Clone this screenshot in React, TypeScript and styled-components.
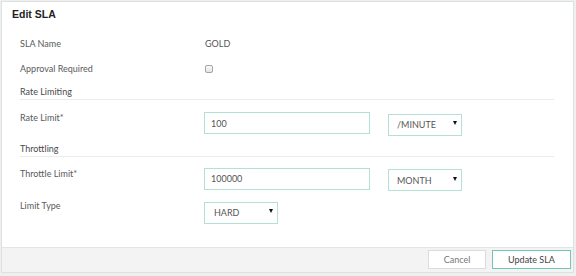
import React from 'react'
import styled, { createGlobalStyle } from 'styled-components'

const GlobalStyles = createGlobalStyle`
  html,
  body {
    margin: 0;
    padding: 0;
    background: #eef0ef;
  }
  body {
    font-family: Lato, 'Open Sans', Arial, sans-serif;
  }
`

const Modal = styled.div`
  box-sizing: border-box;
  margin: 1px 0 0 1px;
  width: 573px;
  height: 272px;
  border: 1px solid #dde2e0;
  background: #fff;
  display: flex;
  flex-direction: column;
`

const Header = styled.div`
  height: 28px;
  padding: 6px 0 0 10px;
  box-sizing: border-box;
`

const Title = styled.h3`
  margin: 0;
  font-family: 'Liberation Sans', Arial, sans-serif;
  font-weight: bold;
  font-size: 10.5px;
  line-height: 12px;
  color: #222;
`

const Body = styled.div`
  flex: 1;
  padding: 1px 19px 0 18px;
`

const StaticRow = styled.div`
  display: grid;
  grid-template-columns: 184px 1fr;
  height: 25px;
  align-items: center;
`

const Label = styled.div`
  font-size: 9px;
  line-height: 12px;
  color: #5a5a5a;
`

const Value = styled.div`
  font-size: 9px;
  color: #555;
  padding-left: 1px;
`

const Check = styled.input.attrs({ type: 'checkbox' })`
  appearance: none;
  margin: 0 0 0 1px;
  width: 8px;
  height: 8px;
  border: 1px solid #a5a5a5;
  border-radius: 2px;
  background: linear-gradient(#fafafa, #e4e4e4);
`

const Section = styled.div<{ $gap: number }>`
  margin-top: ${p => p.$gap}px;
  padding: 5px 0 1px 0;
  font-size: 9px;
  line-height: 12px;
  color: #4a4a4a;
  border-bottom: 1px solid #ebebeb;
`

const FieldRow = styled.div<{ $gap: number }>`
  display: grid;
  grid-template-columns: 184px 1fr;
  align-items: start;
  margin-top: ${p => p.$gap}px;
`

const Controls = styled.div`
  display: flex;
  gap: 18px;
`

const TextInput = styled.input`
  box-sizing: border-box;
  width: 166px;
  height: 22px;
  border: 1px solid #b4e0d9;
  padding: 0 6px;
  font-family: inherit;
  font-size: 9px;
  color: #555;
  outline: none;
`

const SelectWrap = styled.div<{ $width: number }>`
  position: relative;
  width: ${p => p.$width}px;
`

const Select = styled.select<{ $pad: number }>`
  appearance: none;
  box-sizing: border-box;
  width: 100%;
  height: 22px;
  border: 1px solid #b4e0d9;
  border-radius: 0;
  background: #fff;
  padding: 0 0 0 ${p => p.$pad}px;
  font-family: inherit;
  font-size: 9px;
  color: #555;
  outline: none;
`

const Arrow = styled.span`
  position: absolute;
  right: 5px;
  top: 9px;
  width: 0;
  height: 0;
  border-left: 2.5px solid transparent;
  border-right: 2.5px solid transparent;
  border-top: 4px solid #111;
  pointer-events: none;
`

const Footer = styled.div`
  height: 25px;
  box-sizing: border-box;
  border-top: 1px solid #e3e5e4;
  background: #f3f3f3;
  display: flex;
  justify-content: flex-end;
  align-items: flex-start;
  gap: 6px;
  padding: 2px 2px 0 0;
`

const Button = styled.button<{ $primary?: boolean; $width: number }>`
  box-sizing: border-box;
  width: ${p => p.$width}px;
  height: 19px;
  background: #fff;
  border: 1px solid ${p => (p.$primary ? '#72c6b8' : '#dcdcdc')};
  font-family: inherit;
  font-size: 9px;
  color: ${p => (p.$primary ? '#444' : '#777')};
  padding: 0;
`

const Dropdown = ({ value, width, pad }: { value: string; width: number; pad: number }) => (
  <SelectWrap $width={width}>
    <Select $pad={pad} defaultValue={value}>
      <option>{value}</option>
    </Select>
    <Arrow />
  </SelectWrap>
)

export default function App() {
  return (
    <>
      <GlobalStyles />
      <Modal>
        <Header>
          <Title>Edit SLA</Title>
        </Header>
        <Body>
          <StaticRow>
            <Label>SLA Name</Label>
            <Value>GOLD</Value>
          </StaticRow>
          <StaticRow>
            <Label>Approval Required</Label>
            <Check />
          </StaticRow>
          <Section $gap={0}>Rate Limiting</Section>
          <FieldRow $gap={12}>
            <Label>Rate Limit*</Label>
            <Controls>
              <TextInput defaultValue="100" />
              <Dropdown value="/MINUTE" width={74} pad={8} />
            </Controls>
          </FieldRow>
          <Section $gap={2}>Throttling</Section>
          <FieldRow $gap={11}>
            <Label>Throttle Limit*</Label>
            <Controls>
              <TextInput defaultValue="100000" />
              <Dropdown value="MONTH" width={74} pad={8} />
            </Controls>
          </FieldRow>
          <FieldRow $gap={9}>
            <Label>Limit Type</Label>
            <Controls>
              <Dropdown value="HARD" width={74} pad={9} />
            </Controls>
          </FieldRow>
        </Body>
        <Footer>
          <Button $width={58}>Cancel</Button>
          <Button $width={79} $primary>
            Update SLA
          </Button>
        </Footer>
      </Modal>
    </>
  )
}
